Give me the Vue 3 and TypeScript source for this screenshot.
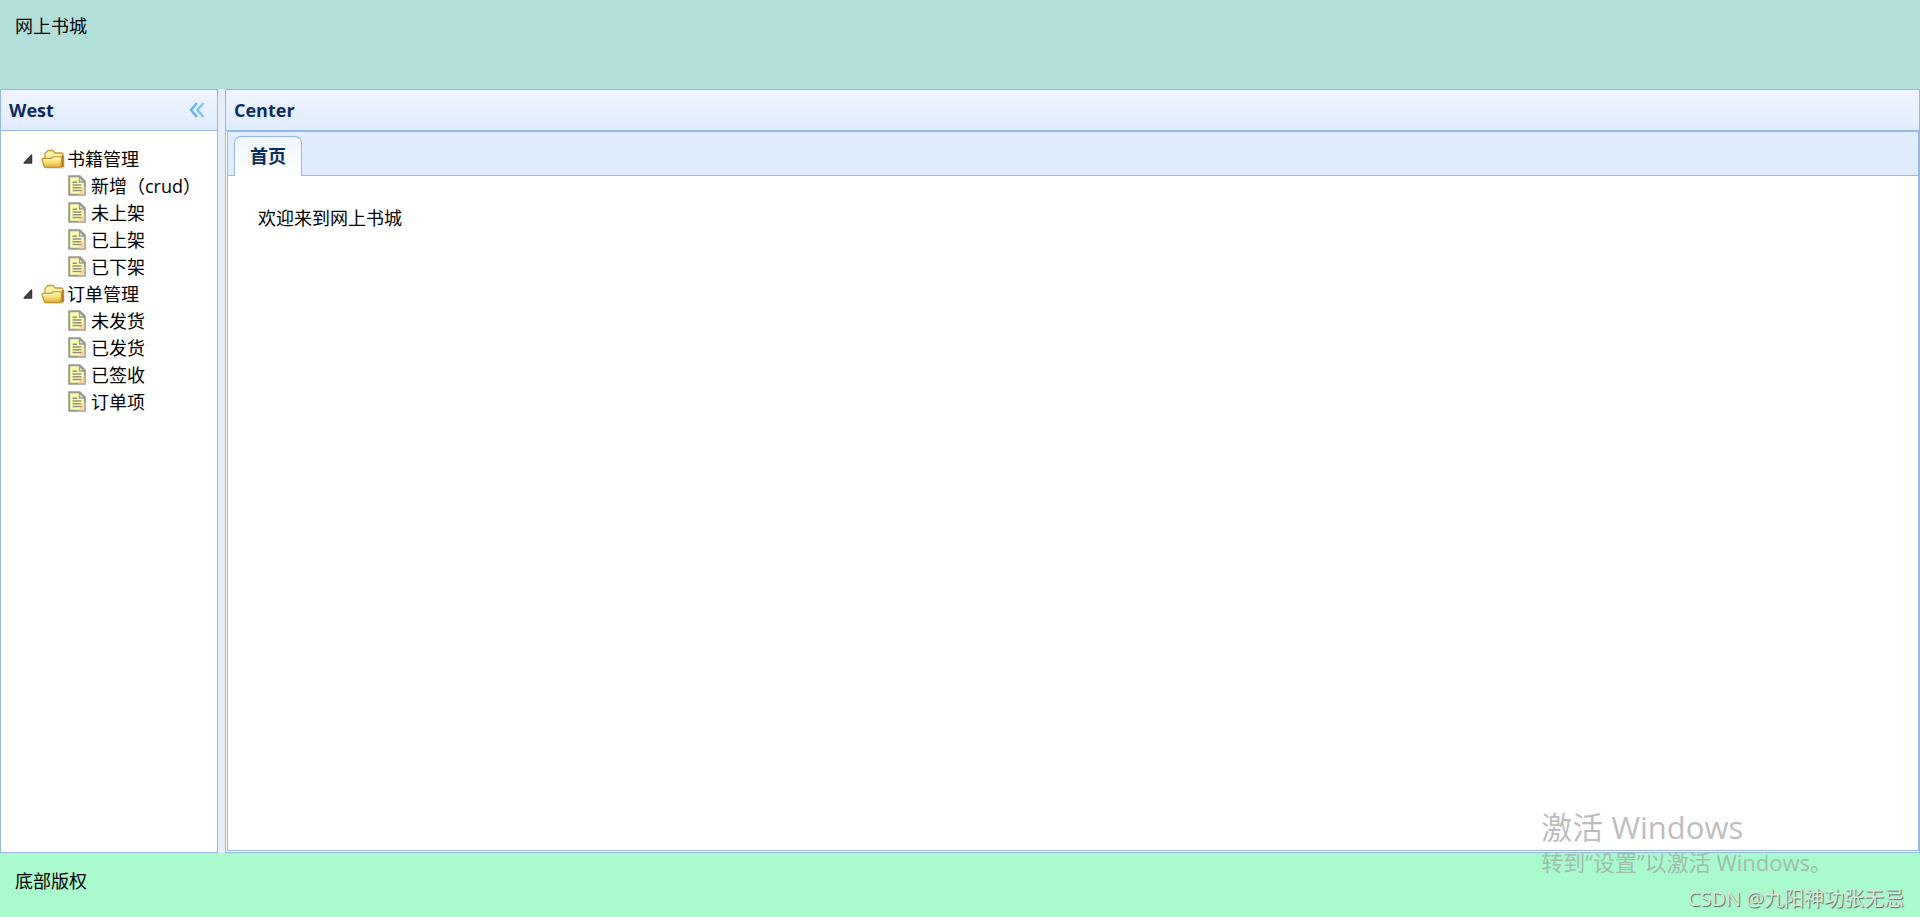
<script setup lang="ts">
import { ref } from 'vue'

interface Branch {
  label: string
  open: boolean
  children: string[]
}

const tree = ref<Branch[]>([
  { label: '书籍管理', open: true, children: ['新增（crud）', '未上架', '已上架', '已下架'] },
  { label: '订单管理', open: true, children: ['未发货', '已发货', '已签收', '订单项'] },
])
</script>

<template>
  <div class="layout">
    <header class="north">网上书城</header>

    <div class="middle">
      <aside class="west">
        <div class="panel-header">
          <h2 class="panel-title">West</h2>
          <button class="collapse" type="button" aria-label="Collapse">
            <svg width="16" height="18" viewBox="0 0 16 18" fill="none" stroke-width="2.4">
              <path d="M8 2 2 9l6 7" stroke="#69b1ed" />
              <path d="M14.500 2l-6 7 6 7" stroke="#7bc3fa" />
            </svg>
          </button>
        </div>
        <ul class="tree">
          <li v-for="branch in tree" :key="branch.label">
            <button class="node branch" type="button" :aria-expanded="branch.open" @click="branch.open = !branch.open">
              <svg class="arrow" width="10" height="10" viewBox="0 0 10 10">
                <path d="M8.500 1v8H1.200z" fill="#484848" stroke="#383838" stroke-width="1.500" stroke-linejoin="round" />
              </svg>
              <svg class="folder" width="24" height="20" viewBox="0 0 24 20">
                <defs>
                  <linearGradient id="folderFront" x1="0" y1="0" x2="0" y2="1">
                    <stop offset="0" stop-color="#fff6a6" />
                    <stop offset=".45" stop-color="#fbe67b" />
                    <stop offset="1" stop-color="#e3ad36" />
                  </linearGradient>
                </defs>
                <path d="M4 19h17.500q1.500 0 1.500-2V7" fill="none" stroke="#c8c8c8" />
                <path d="M4 17V5q0-1 1-1.500L7 1.500h5L14 4h6.500q1.500 0 1.500 1.500V17z" fill="#fff3a5" stroke="#c49a36" stroke-width="1.300" />
                <path d="M21.700 6v11l-2 1" fill="none" stroke="#b37712" stroke-width="1.800" />
                <path d="M1 11q-.3-1.500 1.200-1.500H10l2-1.500h7.500q1.200 0 1.200 1.200L20 17q-.2 1.300-1.500 1.300h-14q-1 0-1.200-1z" fill="url(#folderFront)" stroke="#c5962b" stroke-width="1.300" />
                <path d="M2.500 10.500h8l2-1.500h7" fill="none" stroke="#fffbd8" />
              </svg>
              <span>{{ branch.label }}</span>
            </button>
            <ul v-if="branch.open" class="children">
              <li v-for="child in branch.children" :key="child">
                <button class="node leaf" type="button">
                  <svg class="page" width="18" height="21" viewBox="0 0 18 21">
                    <path d="M1.200 1.200h10.600l5 5v13.600H1.200z" fill="#ffffb0" stroke="#999994" stroke-width="2" />
                    <path d="M11.500 2v5h5z" fill="#eeeec8" stroke="#999994" stroke-width="1.300" />
                    <path d="M16.500 11v8.500H10z" fill="#fbd5a0" />
                    <path d="M4.500 7.200h4.500M4.500 10h9M4.500 12.800h9M4.500 15.600h9" stroke="#92927c" stroke-width="1.500" />
                  </svg>
                  <span>{{ child }}</span>
                </button>
              </li>
            </ul>
          </li>
        </ul>
      </aside>

      <main class="center">
        <div class="panel-header">
          <h2 class="panel-title">Center</h2>
        </div>
        <div class="center-body">
          <section class="tabs">
            <div class="tab-bar" role="tablist">
              <button id="home-tab" class="tab" type="button" role="tab" aria-selected="true" aria-controls="home-panel">首页</button>
            </div>
            <div id="home-panel" class="tab-panel" role="tabpanel" aria-labelledby="home-tab">欢迎来到网上书城</div>
          </section>
        </div>
      </main>
    </div>

    <footer class="south">底部版权</footer>

    <div class="activation">
      <p class="activation-title">激活 Windows</p>
      <p class="activation-text">转到“设置”以激活 Windows。</p>
    </div>
    <div class="credit">CSDN @九阳神功张无忌</div>
  </div>
</template>

<style>
body {
  margin: 0;
}
</style>

<style scoped>
.layout {
  position: relative;
  display: flex;
  flex-direction: column;
  height: 100vh;
  overflow: hidden;
  background: #e6eef8;
  color: #000;
  font-family: "Open Sans", "Noto Sans CJK SC", sans-serif;
  font-size: 18px;
  line-height: 24px;
}

.layout * {
  box-sizing: border-box;
}

button {
  padding: 0;
  border: 0;
  background: none;
  color: inherit;
  font: inherit;
  cursor: pointer;
}

ul {
  margin: 0;
  padding: 0;
  list-style: none;
}

.north {
  flex: 0 0 89px;
  padding: 14px 15px;
  background: #b3dfda;
}

.middle {
  flex: 1;
  display: flex;
  gap: 7px;
  min-height: 0;
}

.west,
.center {
  display: flex;
  flex-direction: column;
  border: 1px solid #95b8e7;
  background: #fff;
}

.west {
  flex: 0 0 218px;
}

.center {
  flex: 1;
  min-width: 0;
}

.panel-header {
  flex: 0 0 41px;
  display: flex;
  align-items: center;
  justify-content: space-between;
  padding: 0 12px 0 8px;
  border-bottom: 1px solid #95b8e7;
  background: linear-gradient(#eff5ff, #e0ecff);
}

.panel-title {
  margin: 0;
  color: #0e2d5f;
  font-size: 18px;
  line-height: 24px;
}

.collapse {
  display: flex;
}

.tree {
  padding: 14px 0 0 22px;
}

.node {
  display: flex;
  align-items: center;
  height: 27px;
  white-space: nowrap;
}

.arrow {
  margin-right: 8px;
}

.folder {
  margin-right: 2px;
}

.children {
  padding-left: 45px;
}

.page {
  margin-right: 5px;
}

.center-body {
  flex: 1;
  display: flex;
  min-height: 0;
  padding: 0 0 1px 1px;
}

.tabs {
  flex: 1;
  display: flex;
  flex-direction: column;
  border: 1px solid #95b8e7;
}

.tab-bar {
  flex: 0 0 44px;
  display: flex;
  align-items: flex-end;
  padding: 0 6px;
  border-bottom: 1px solid #95b8e7;
  background: #e0ecff;
}

.tab {
  height: 40px;
  margin-bottom: -1px;
  padding: 0 15px 2px;
  border: 1px solid #95b8e7;
  border-bottom: 0;
  border-radius: 7px 7px 0 0;
  background: linear-gradient(#eff5ff, #fff);
  color: #0e2d5f;
  font-weight: 700;
}

.tab-panel {
  padding: 30px;
}

.south {
  flex: 0 0 64px;
  padding: 16px 15px;
  background: #a9facd;
}

.activation {
  position: absolute;
  right: 88px;
  bottom: 40px;
  color: rgba(160, 160, 160, 0.7);
  pointer-events: none;
}

.activation p {
  margin: 0;
}

.activation-title {
  font-size: 31px;
  line-height: 40px;
}

.activation-text {
  font-size: 22px;
  line-height: 30px;
}

.credit {
  position: absolute;
  right: 16px;
  bottom: 5px;
  color: #dce8e0;
  font-size: 20px;
  line-height: 26px;
  text-shadow: 1px 1px 1px #50685a;
  pointer-events: none;
}
</style>
